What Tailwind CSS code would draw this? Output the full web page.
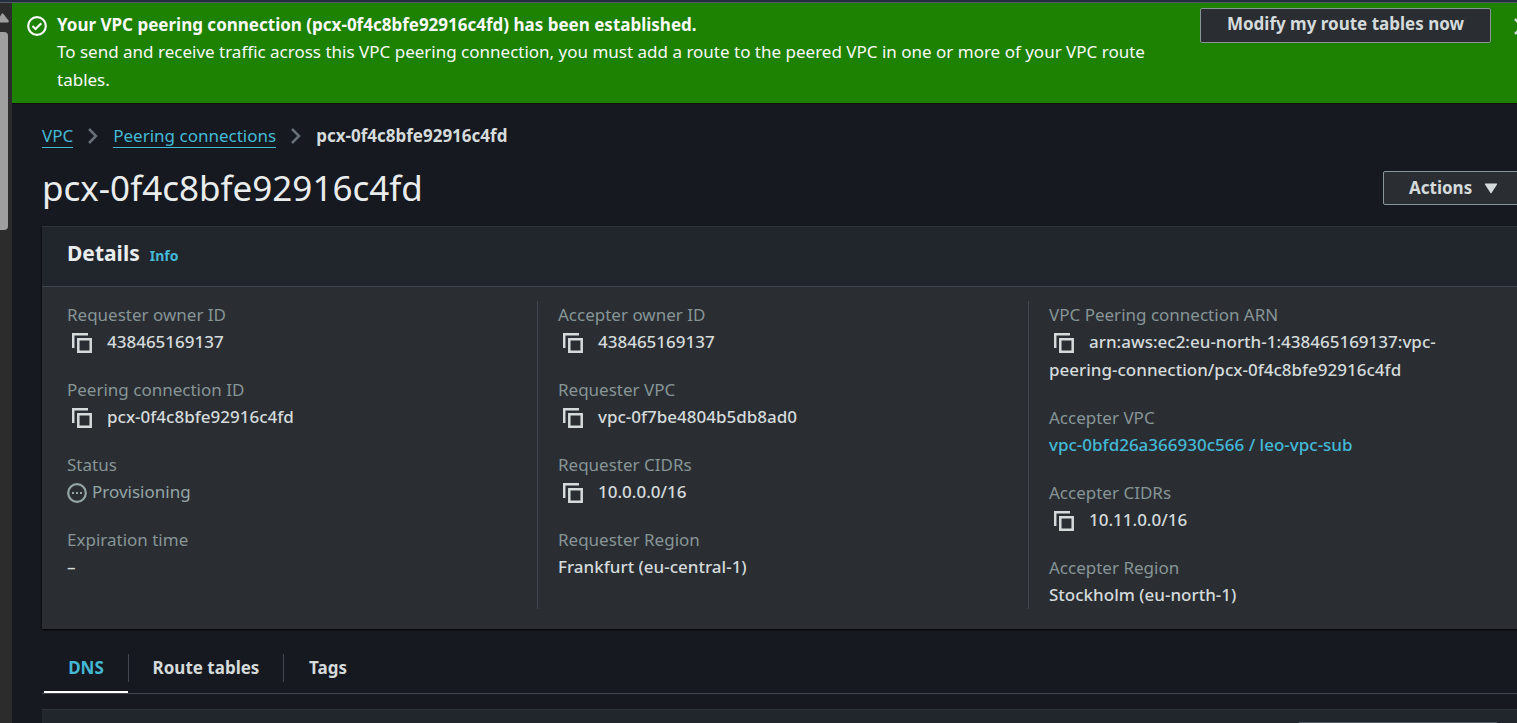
<!DOCTYPE html>
<html lang="en">
<head>
<meta charset="utf-8">
<title>Peering connection details</title>
<script src="https://cdn.jsdelivr.net/npm/@tailwindcss/browser@4"></script>
</head>
<body class="h-screen overflow-hidden bg-[#16191f] font-['Noto_Sans','Open_Sans',sans-serif] text-[17px] leading-7 text-[#d5dbdb]">
<svg class="hidden" aria-hidden="true">
  <symbol id="copy" viewBox="0 0 20 20"><path d="M1.200 15V1.200h14.800M6.300 6.300h12.400v12.400H6.300z" fill="none" stroke="currentColor" stroke-width="2.500"/></symbol>
</svg>
<div class="flex h-full flex-col">
  <div class="h-[3px] shrink-0 border-b border-[#545b64] bg-[#232f3e]"></div>
  <div class="flex min-h-0 grow">
    <div class="w-3 shrink-0 bg-[#2c2c2c]" aria-hidden="true">
      <svg class="mt-2.5 h-[10px] w-[9px]" viewBox="0 0 9 10"><path d="M-3 9.500 L1.500 1 Q2.500-.5 3.500 1 L8.500 7.500 Q9.500 9.500 7.500 9.500z" fill="#9f9f9f"/></svg>
      <div class="mt-[9px] h-[198px] w-2 rounded-r-[4px] bg-[#9f9f9f]"></div>
    </div>
    <div class="min-w-0 grow overflow-hidden">
      <section class="flex h-[100px] items-start bg-[#1d8102] pt-[5px] pl-[15px] text-[#fafafa]">
        <svg class="mt-2 size-5 shrink-0" viewBox="0 0 20 20" fill="none" stroke="currentColor" stroke-width="2.200"><circle cx="10" cy="10" r="8.800"/><path d="M5.500 10l3 3 5.800-5.800"/></svg>
        <div class="mt-[3px] ml-[10px] min-w-0 grow">
          <h2 class="leading-[27px] font-bold">Your VPC peering connection (pcx-0f4c8bfe92916c4fd) has been established.</h2>
          <p>To send and receive traffic across this VPC peering connection, you must add a route to the peered VPC in one or more of your VPC route tables.</p>
        </div>
        <button class="ml-10 h-[35px] w-[291px] shrink-0 rounded-[2px] border border-[#879596] bg-[#2a2e33] leading-[30px] font-bold text-[#d5dbdb] pb-[3px]">Modify my route tables now</button>
        <button class="mt-[9px] -mr-4 ml-[22px] h-5 w-5 shrink-0" aria-label="Dismiss"><svg class="size-5" viewBox="0 0 20 20" fill="none" stroke="#d5dbdb" stroke-width="2.500"><path d="M2 2l15 15M17 2L2 17"/></svg></button>
      </section>
      <main class="-mr-[23px] border-t border-[#0f1114] pl-[30px]">
        <nav class="flex items-center pt-5" aria-label="Breadcrumb">
          <a href="#" class="border-b border-[#44b9d6] leading-[23px] text-[#44b9d6]">VPC</a>
          <svg class="mx-[15px] h-[18px] w-[10px]" viewBox="0 0 10 18" fill="none" stroke="#687078" stroke-width="2.500"><path d="M1 2l7 7-7 7"/></svg>
          <a href="#" class="border-b border-[#44b9d6] leading-[23px] text-[#44b9d6]">Peering connections</a>
          <svg class="mx-[15px] h-[18px] w-[10px]" viewBox="0 0 10 18" fill="none" stroke="#687078" stroke-width="2.500"><path d="M1 2l7 7-7 7"/></svg>
          <span class="leading-6 font-bold">pcx-0f4c8bfe92916c4fd</span>
        </nav>
        <div class="mt-[18px] flex h-[60px] items-start justify-between">
          <h1 class="text-[35px] leading-[43px] text-[#eaeded]">pcx-0f4c8bfe92916c4fd</h1>
          <button class="mt-[5px] flex h-[34px] w-[157px] items-center rounded-[2px] border border-[#879596] bg-[#2a2e33] pl-[25px] font-bold">Actions
            <svg class="ml-3 h-[11px] w-[14px]" viewBox="0 0 13 11"><path d="M1 .5h11q1 0 .5 1L7 10q-.5.8-1 0L.5 1.500Q0 .5 1 .5z" fill="currentColor"/></svg></button>
        </div>
        <section class="border-t border-[#2f3439] bg-[#2a2e33] shadow-[0_1px_2px_#000]">
          <header class="flex h-[60px] items-baseline gap-[10px] border-b border-[#414750] bg-[#21252c] pt-3 pl-[25px]">
            <h2 class="text-[21px] leading-7 font-bold text-[#eaeded]">Details</h2>
            <a href="#" class="text-[14px] font-bold text-[#44b9d6]">Info</a>
          </header>
          <div class="grid grid-cols-3 pt-[14px] pb-5 pl-[25px]">
            <dl class="flex flex-col gap-5">
              <div><dt class="leading-[27px] text-[#879596]">Requester owner ID</dt>
                <dd class="font-medium"><button aria-label="Copy" class="mr-[15px] ml-[5px] inline-block size-5 align-[-5px]"><svg class="size-5"><use href="#copy"/></svg></button>438465169137</dd></div>
              <div><dt class="leading-[27px] text-[#879596]">Peering connection ID</dt>
                <dd class="font-medium"><button aria-label="Copy" class="mr-[15px] ml-[5px] inline-block size-5 align-[-5px]"><svg class="size-5"><use href="#copy"/></svg></button>pcx-0f4c8bfe92916c4fd</dd></div>
              <div><dt class="leading-[27px] text-[#879596]">Status</dt>
                <dd class="text-[#95a5a6]"><svg class="mr-[5px] inline-block size-5 align-[-5px]" viewBox="0 0 20 20"><circle cx="10" cy="10" r="8.800" fill="none" stroke="currentColor" stroke-width="2.200"/><path d="M5 9h2v2H5zM9 9h2v2H9zM13 9h2v2h-2z" fill="currentColor"/></svg>Provisioning</dd></div>
              <div><dt class="leading-[27px] text-[#879596]">Expiration time</dt>
                <dd class="font-medium">–</dd></div>
            </dl>
            <dl class="-ml-[21px] flex flex-col gap-5 border-l border-[#414750] pl-5">
              <div><dt class="leading-[27px] text-[#879596]">Accepter owner ID</dt>
                <dd class="font-medium"><button aria-label="Copy" class="mr-[15px] ml-[5px] inline-block size-5 align-[-5px]"><svg class="size-5"><use href="#copy"/></svg></button>438465169137</dd></div>
              <div><dt class="leading-[27px] text-[#879596]">Requester VPC</dt>
                <dd class="font-medium"><button aria-label="Copy" class="mr-[15px] ml-[5px] inline-block size-5 align-[-5px]"><svg class="size-5"><use href="#copy"/></svg></button>vpc-0f7be4804b5db8ad0</dd></div>
              <div><dt class="leading-[27px] text-[#879596]">Requester CIDRs</dt>
                <dd class="font-medium"><button aria-label="Copy" class="mr-[15px] ml-[5px] inline-block size-5 align-[-5px]"><svg class="size-5"><use href="#copy"/></svg></button>10.0.0.0/16</dd></div>
              <div><dt class="leading-[27px] text-[#879596]">Requester Region</dt>
                <dd class="font-medium">Frankfurt (eu-central-1)</dd></div>
            </dl>
            <dl class="-ml-[21px] flex flex-col gap-5 border-l border-[#414750] pl-5">
              <div><dt class="leading-[27px] text-[#879596]">VPC Peering connection ARN</dt>
                <dd class="font-medium"><button aria-label="Copy" class="mr-[15px] ml-[5px] inline-block size-5 align-[-5px]"><svg class="size-5"><use href="#copy"/></svg></button>arn:aws:ec2:eu-north-1:438465169137:vpc-<br>peering-connection/pcx-0f4c8bfe92916c4fd</dd></div>
              <div><dt class="leading-[27px] text-[#879596]">Accepter VPC</dt>
                <dd class="font-medium"><a href="#" class="text-[#44b9d6]">vpc-0bfd26a366930c566 / leo-vpc-sub</a></dd></div>
              <div><dt class="leading-[27px] text-[#879596]">Accepter CIDRs</dt>
                <dd class="font-medium"><button aria-label="Copy" class="mr-[15px] ml-[5px] inline-block size-5 align-[-5px]"><svg class="size-5"><use href="#copy"/></svg></button>10.11.0.0/16</dd></div>
              <div><dt class="leading-[27px] text-[#879596]">Accepter Region</dt>
                <dd class="font-medium">Stockholm (eu-north-1)</dd></div>
            </dl>
          </div>
        </section>
        <div role="tablist" class="flex h-[65px] items-end border-b border-[#414750] font-bold">
          <button role="tab" aria-selected="true" class="ml-[2px] h-[39px] w-[84px] border-b-2 border-white pb-[9px] text-[#44b9d6]">DNS</button>
          <button role="tab" aria-selected="false" class="mb-[11px] h-7 w-[156px] border-x border-[#414750]">Route tables</button>
          <button role="tab" aria-selected="false" class="mb-[11px] h-7 w-[88px]">Tags</button>
        </div>
        <section class="mt-[15px] h-5 border-t border-[#2f3439] bg-[#21252c] pt-3" aria-label="DNS settings">
          <div class="ml-[1257px] h-px w-[198px] bg-[#545b64]"></div>
        </section>
      </main>
    </div>
  </div>
</div>
</body>
</html>
